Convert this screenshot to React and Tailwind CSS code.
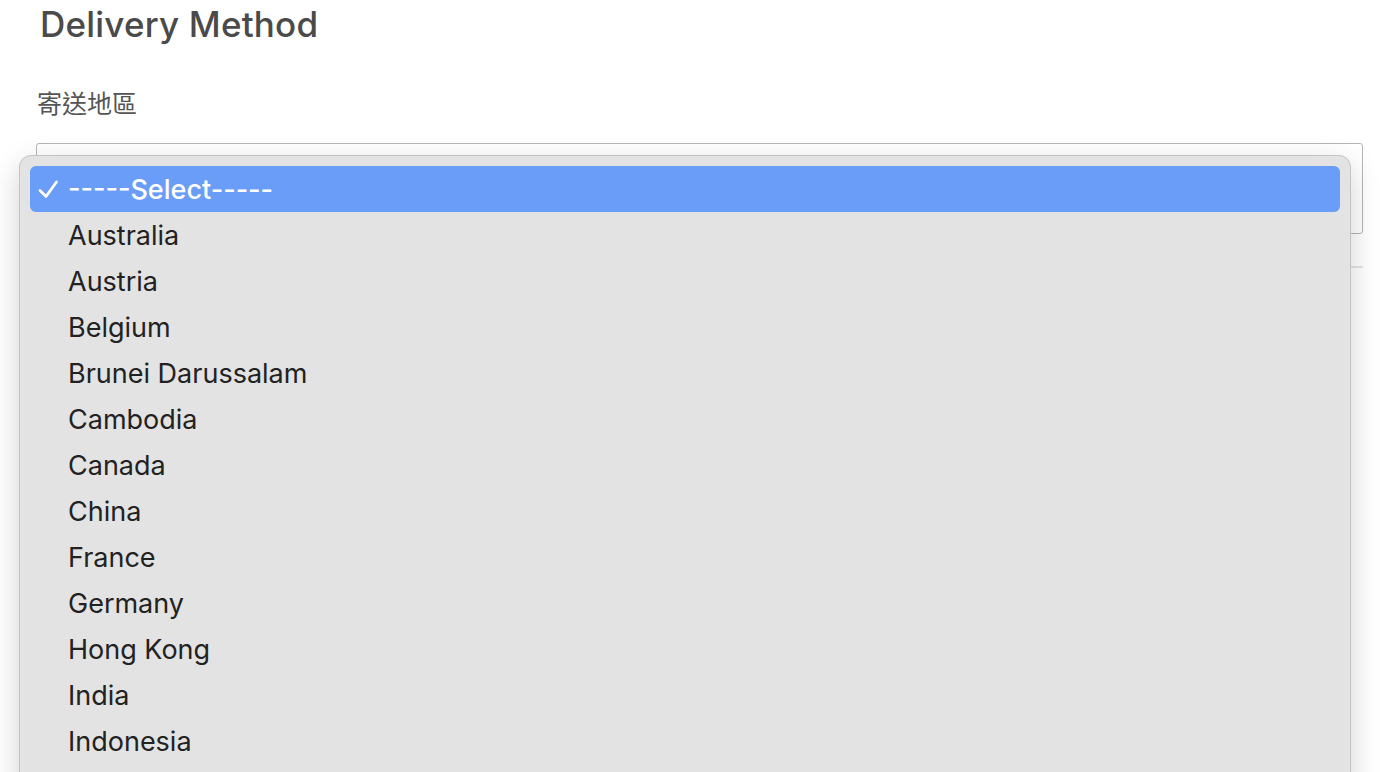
import React from "react";

const items = [
  "Australia",
  "Austria",
  "Belgium",
  "Brunei Darussalam",
  "Cambodia",
  "Canada",
  "China",
  "France",
  "Germany",
  "Hong Kong",
  "India",
  "Indonesia",
];

export default function App() {
  return (
    <div
      className="relative w-[1380px] h-[772px] overflow-hidden bg-white"
      style={{ fontFamily: "Inter, 'Noto Sans CJK TC', sans-serif" }}
    >
      <div className="pl-[36px] pr-[17px]">
        <h1 className="pl-[4px] pt-[3px] text-[35px] leading-[42px] font-medium text-[#4a4a4a] tracking-[0.2px]">
          Delivery Method
        </h1>
        <div className="mt-[44px] pl-[1px] text-[25px] leading-[30px] text-[#555]">
          寄送地區
        </div>
        <div className="mt-[24px] h-[91px] border border-[#b5b5b5] rounded-[3px] bg-white"></div>
        <div className="mt-[32px] h-[2px] bg-[#e4e4e4]"></div>
      </div>

      <div className="absolute left-[19px] top-[155px] w-[1332px] h-[700px] rounded-[12px] border border-[#c4c4c4] bg-[#e3e3e3] shadow-[0_10px_30px_rgba(0,0,0,0.18)] px-[10px] pt-[10px]">
        <div className="flex items-center h-[46px] rounded-[6px] bg-[#699df8] text-white">
          <svg width="21" height="19" viewBox="0 0 21 19" className="ml-[8px] mr-[9px]">
            <polyline
              points="2,10.5 8,16.5 18.5,2"
              fill="none"
              stroke="white"
              strokeWidth="2.8"
              strokeLinecap="round"
              strokeLinejoin="round"
            />
          </svg>
          <span className="text-[27px] leading-[46px] pt-[2px] font-medium">-----Select-----</span>
        </div>
        {items.map((it) => (
          <div
            key={it}
            className="h-[46px] pl-[38px] pt-[3px] flex items-center text-[27px] text-[#222]"
          >
            {it}
          </div>
        ))}
      </div>
    </div>
  );
}
